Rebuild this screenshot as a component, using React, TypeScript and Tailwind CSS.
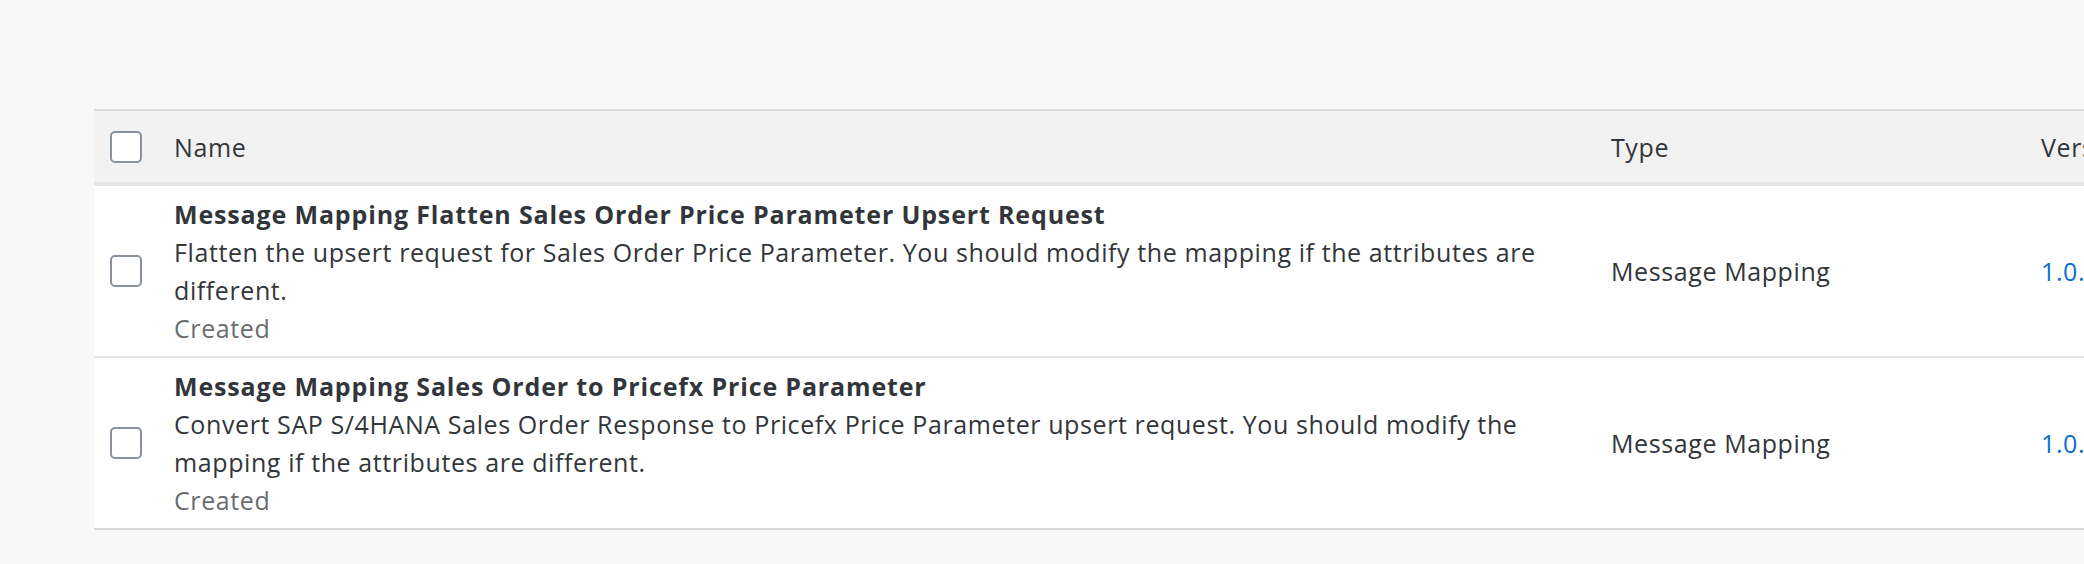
import React from 'react';

type Artifact = {
  id: string;
  name: string;
  description: string;
  status: string;
  type: string;
  version: string;
};

const artifacts: Artifact[] = [
  {
    id: 'mm-flatten',
    name: 'Message Mapping Flatten Sales Order Price Parameter Upsert Request',
    description:
      'Flatten the upsert request for Sales Order Price Parameter. You should modify the mapping if the attributes are different.',
    status: 'Created',
    type: 'Message Mapping',
    version: '1.0.0',
  },
  {
    id: 'mm-pricefx',
    name: 'Message Mapping Sales Order to Pricefx Price Parameter',
    description:
      'Convert SAP S/4HANA Sales Order Response to Pricefx Price Parameter upsert request. You should modify the mapping if the attributes are different.',
    status: 'Created',
    type: 'Message Mapping',
    version: '1.0.0',
  },
];

function Checkbox() {
  return (
    <span className="block h-[32px] w-[32px] rounded-[5px] border-2 border-[#89919a] bg-white" />
  );
}

// columnas: checkbox | nombre | tipo | versión
const cols = 'grid grid-cols-[80px_1437px_430px_300px]';

export default function App() {
  return (
    <div
      className="h-[564px] w-full overflow-hidden bg-[#f7f7f7] pl-[94px] pt-[109px] text-[#32363a]"
      style={{ fontFamily: '"Open Sans", "Noto Sans", sans-serif' }}
    >
      <div className="w-[2247px] text-[25px] leading-[38px] tracking-[0.6px]">
        {/* Cabecera */}
        <div
          className={`${cols} h-[77px] items-center border-t-2 border-b-4 border-t-[#d9d9d9] border-b-[#e5e5e5] bg-[#f2f2f2]`}
        >
          <div className="pl-[16px]">
            <Checkbox />
          </div>
          <div>Name</div>
          <div>Type</div>
          <div>Version</div>
        </div>

        {/* Filas */}
        {artifacts.map((a, i) => (
          <div
            key={a.id}
            className={`${cols} items-center bg-white ${
              i === artifacts.length - 1
                ? 'border-b-2 border-[#d9d9d9]'
                : 'border-b-2 border-[#e5e5e5]'
            }`}
          >
            <div className="pl-[16px]">
              <Checkbox />
            </div>
            <div className="py-[9px] pr-[40px]">
              <div className="font-bold tracking-[0.85px]">{a.name}</div>
              <div>{a.description}</div>
              <div className="text-[#6a6d70]">{a.status}</div>
            </div>
            <div>{a.type}</div>
            <div className="text-[#0a6ed1]">{a.version}</div>
          </div>
        ))}
      </div>
    </div>
  );
}
